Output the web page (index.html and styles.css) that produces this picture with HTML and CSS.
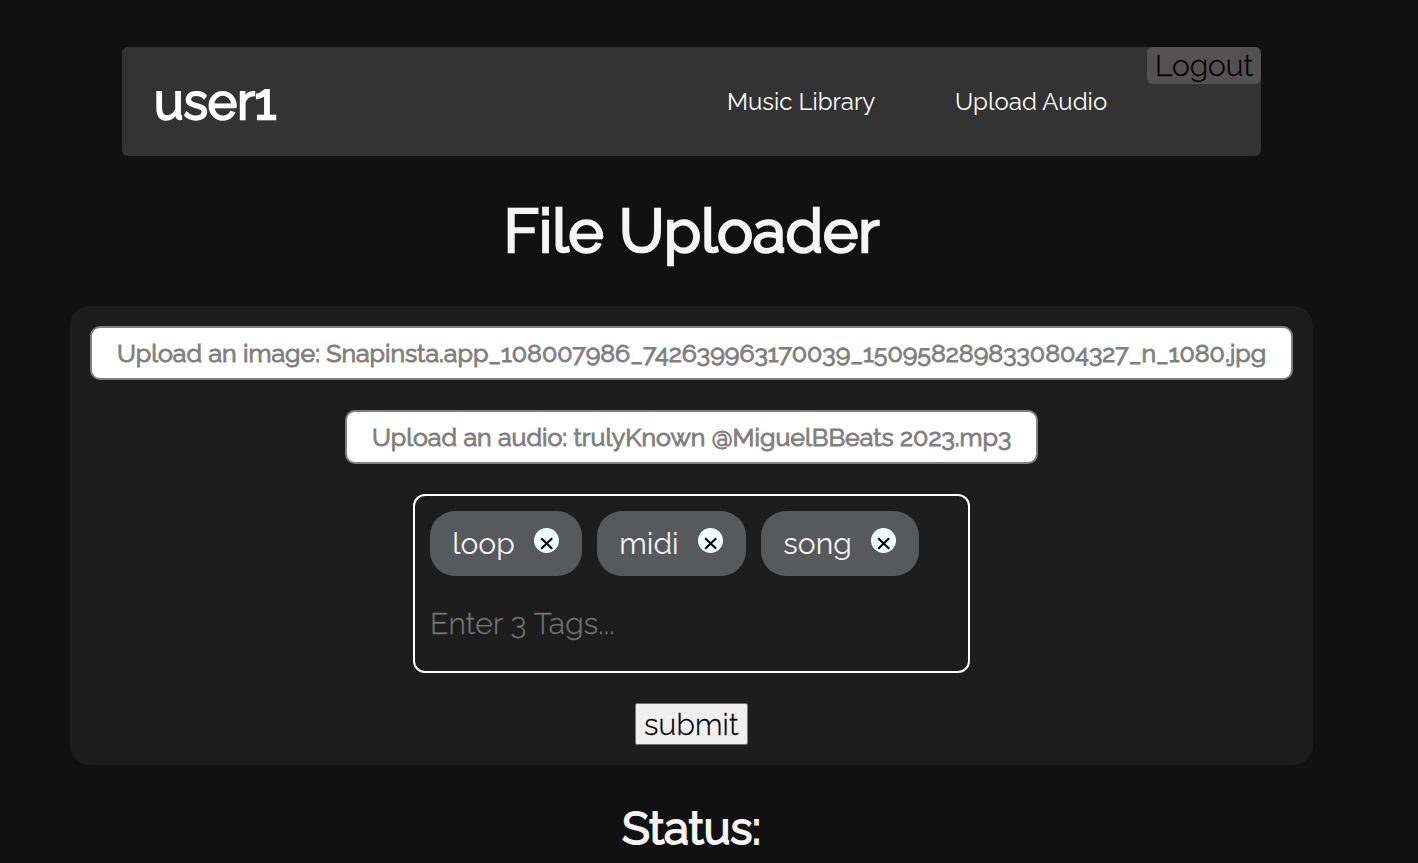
FILE: index.html
```html
<!DOCTYPE html>
<html lang="en">
<head>
<meta charset="utf-8">
<title>File Uploader</title>
<link rel="stylesheet" href="styles.css">
</head>
<body>
<header class="navbar">
  <h1 class="brand"><span>user1</span></h1>
  <nav class="links"><a class="library">Music Library</a><a class="audio">Upload Audio</a></nav>
  <button class="logout"><span>Logout</span></button>
</header>
<h1 class="title"><span>File Uploader</span></h1>
<main class="panel">
  <label class="file image"><span>Upload an image: Snapinsta.app_108007986_742639963170039_1509582898330804327_n_1080.jpg</span></label>
  <label class="file track"><span>Upload an audio: trulyKnown @MiguelBBeats 2023.mp3</span></label>
  <div class="tags">
    <div class="tag loop"><span class="text">loop</span><span class="close"><svg viewBox="0 0 25 25"><path d="M7.2 10.2 18.2 20.8M18.2 10.2 7.2 20.8"/></svg></span></div>
    <div class="tag midi"><span class="text">midi</span><span class="close"><svg viewBox="0 0 25 25"><path d="M7.2 10.2 18.2 20.8M18.2 10.2 7.2 20.8"/></svg></span></div>
    <div class="tag song"><span class="text">song</span><span class="close"><svg viewBox="0 0 25 25"><path d="M7.2 10.2 18.2 20.8M18.2 10.2 7.2 20.8"/></svg></span></div>
    <div class="entry">Enter 3 Tags...</div>
  </div>
  <button class="submit"><span>submit</span></button>
</main>
<h2 class="status"><span>Status:</span></h2>
</body>
</html>
```
FILE: styles.css
```css
* { box-sizing: border-box; }
body {
  margin: 0;
  padding: 47px 35px 0 0;
  height: 863px;
  overflow: hidden;
  background: #111;
  color: #f5f5f5;
  font: 300 30px/35px Raleway, Lato, sans-serif;
  font-feature-settings: "onum";
  display: flex;
  flex-direction: column;
  align-items: center;
  white-space: nowrap;
}
h1, h2 { margin: 0; font-weight: 400; -webkit-text-stroke: 0.045em currentColor; }
button { font: inherit; font-feature-settings: inherit; color: #000; padding: 0; margin: 0; border: 0; display: flex; }
.navbar {
  width: 1139px;
  height: 109px;
  flex: none;
  background: #333;
  border-radius: 6px;
  display: flex;
  color: #fff;
}
.brand { width: 605px; padding: 23px 0 0 32px; font-size: 50px; line-height: 64px; }
.links { display: flex; font-size: 24px; font-weight: 400; line-height: 28px; padding-top: 41px; }
.library { width: 228px; }
.audio { width: 192px; letter-spacing: 0.05px; }
.logout { width: 114px; height: 37px; padding: 1px 0 0 8px; background: #535151; border-radius: 6px; -webkit-text-stroke: 0.3px currentColor; }
.title { height: 150px; flex: none; padding-top: 38px; font-size: 60px; line-height: 74px; }
.panel {
  width: 1243px;
  height: 459px;
  flex: none;
  padding: 20px;
  background: #1d1d1d;
  border-radius: 20px;
  display: flex;
  flex-direction: column;
  align-items: center;
}
.file {
  height: 54px;
  padding: 10px 0 0 25px;
  margin-bottom: 30px;
  background: #fff;
  border: 2px solid #808080;
  border-radius: 10px;
  color: #808080;
  font-size: 25px;
  line-height: 31px;
  font-weight: 400;
  -webkit-text-stroke: 0.04em currentColor;
}
.image { width: 1203px; }
.track { width: 693px; }
.tags {
  width: 557px;
  height: 179px;
  padding: 15px;
  border: 2px solid #fff;
  border-radius: 12px;
  display: flex;
  flex-wrap: wrap;
  align-content: flex-start;
  gap: 15px;
}
.tag {
  height: 65px;
  padding: 0 23px 0 22.3px;
  border-radius: 25px;
  background: #58595b;
  display: flex;
  justify-content: space-between;
}
.text { padding-top: 15px; font-weight: 400; }
.loop { width: 152px; }
.midi { width: 149px; }
.song { width: 158px; }
.close { width: 25px; height: 25px; margin-top: 17px; border-radius: 50%; background: #f0ffff; }
.close svg { display: block; width: 25px; height: 25px; stroke: #000; stroke-width: 2.1; fill: none; }
.entry { width: 100%; padding-top: 15px; color: #757575; letter-spacing: 0.2px; -webkit-text-stroke: 0.3px currentColor; }
.submit { width: 113px; height: 42px; margin-top: 30px; padding: 3px 0 0 8px; background: #efefef; border: 1px solid #767676; border-radius: 2px; letter-spacing: 0.2px; -webkit-text-stroke: 0.3px currentColor; }
.status { padding-top: 37px; font-size: 45px; line-height: 54px; }
```
